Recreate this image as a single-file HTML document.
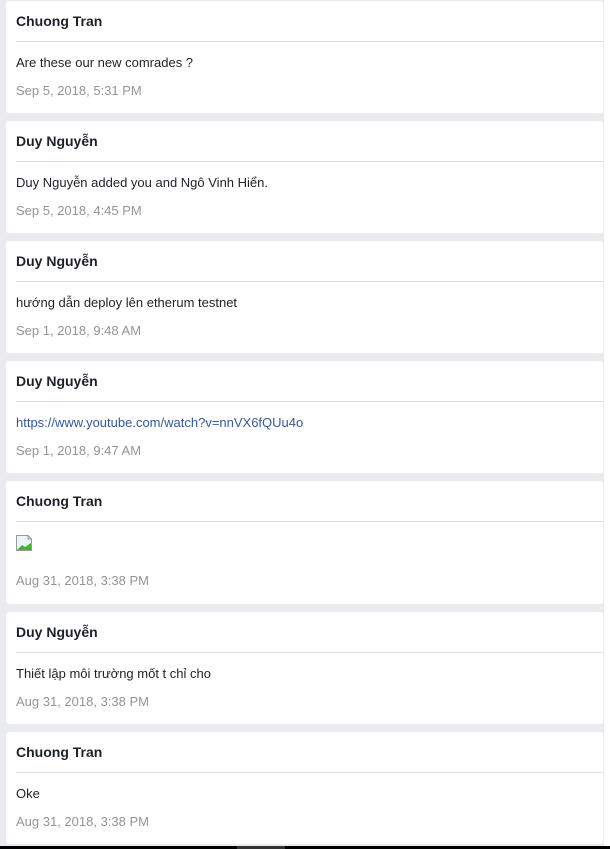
<!DOCTYPE html>
<html><head><meta charset="utf-8"><style>
html,body{margin:0;padding:0;}
body{width:610px;height:849px;background:#fff;overflow:hidden;position:relative;font-family:"Liberation Sans",Arial,sans-serif;}
.wrap{position:absolute;left:0;top:0;width:604px;height:846px;background:#e9ebee;}
.card{position:absolute;left:6px;width:597px;background:#fff;border-radius:3px;}
.name{position:absolute;left:10px;top:11px;font-size:14px;font-weight:bold;color:#1d2129;line-height:18px;}
.hr{position:absolute;left:10px;right:0;top:40px;height:1px;background:#dddfe2;}
.msg{position:absolute;left:10px;top:54px;font-size:13px;color:#1d2129;line-height:16px;}
.date{position:absolute;left:10px;font-size:13px;color:#90949c;line-height:18px;}
a{color:#365899;text-decoration:none;}
.bar{position:absolute;left:0;top:846px;width:610px;height:3px;background:#000;}
.bar i{position:absolute;left:237px;width:48px;height:3px;background:#333;}
</style></head><body>
<div class="wrap">
<div class="card" style="top:1px;height:112px"><div class="name">Chuong Tran</div><div class="hr"></div><div class="msg">Are these our new comrades ?</div><div class="date" style="top:81px">Sep 5, 2018, 5:31 PM</div></div>
<div class="card" style="top:121px;height:112px"><div class="name">Duy Nguyễn</div><div class="hr"></div><div class="msg">Duy Nguyễn added you and Ngô Vinh Hiển.</div><div class="date" style="top:81px">Sep 5, 2018, 4:45 PM</div></div>
<div class="card" style="top:241px;height:112px"><div class="name">Duy Nguyễn</div><div class="hr"></div><div class="msg">hướng dẫn deploy lên etherum testnet</div><div class="date" style="top:81px">Sep 1, 2018, 9:48 AM</div></div>
<div class="card" style="top:361px;height:112px"><div class="name">Duy Nguyễn</div><div class="hr"></div><div class="msg"><a>https://www.youtube.com/watch?v=nnVX6fQUu4o</a></div><div class="date" style="top:81px">Sep 1, 2018, 9:47 AM</div></div>
<div class="card" style="top:481px;height:123px"><div class="name">Chuong Tran</div><div class="hr"></div>
<svg style="position:absolute;left:10px;top:54px" width="16" height="16" viewBox="0 0 16 16"><path d="M0.5 0.5H12L15.5 4V15.5H0.5Z" fill="#eef3f8" stroke="#999"/><path d="M1 15L6 10L9 12L15 8V15Z" fill="#4caf3a"/><path d="M12 0.5V4H15.5" fill="none" stroke="#999"/></svg>
<div class="date" style="top:91px">Aug 31, 2018, 3:38 PM</div></div>
<div class="card" style="top:612px;height:112px"><div class="name">Duy Nguyễn</div><div class="hr"></div><div class="msg">Thiết lập môi trường mốt t chỉ cho</div><div class="date" style="top:81px">Aug 31, 2018, 3:38 PM</div></div>
<div class="card" style="top:732px;height:112px"><div class="name">Chuong Tran</div><div class="hr"></div><div class="msg">Oke</div><div class="date" style="top:81px">Aug 31, 2018, 3:38 PM</div></div>
</div>
<div class="bar"><i></i></div>
</body></html>
